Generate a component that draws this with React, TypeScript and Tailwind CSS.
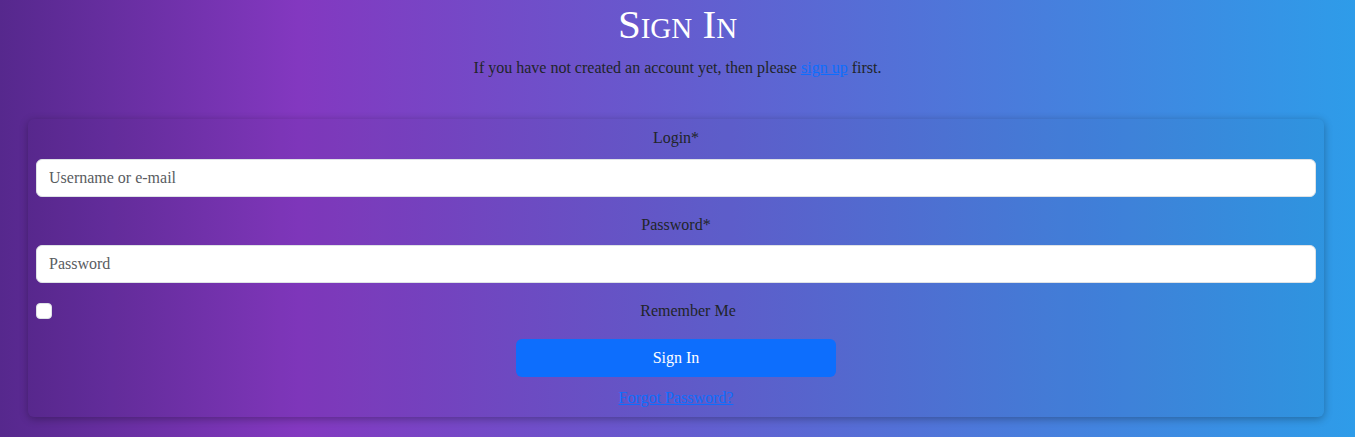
import React, { useState } from "react";

const App: React.FC = () => {
  const [login, setLogin] = useState("");
  const [password, setPassword] = useState("");
  const [remember, setRemember] = useState(false);

  return (
    <div className="min-h-screen bg-linear-to-r/srgb from-[#56288d] via-[#8338c0] via-22% to-[#2e9ce9] font-['Liberation_Serif',serif] text-[#212529] text-base">
      <h1 className="text-center text-[41px] leading-[48px] text-white [font-variant:small-caps]">Sign In</h1>
      <p className="mt-2 text-center leading-6">
        If you have not created an account yet, then please{" "}
        <a href="#" className="text-[#0d6efd] underline">sign up</a> first.
      </p>

      <form
        className="ml-7 mr-[31px] mt-[39px] rounded-md bg-black/[0.03] px-2 pt-[7px] pb-[7px] shadow-[0_2px_8px_rgba(0,0,0,0.3)]"
        onSubmit={(e) => e.preventDefault()}
      >
        <label className="block text-center leading-6">Login*</label>
        <input
          value={login}
          onChange={(e) => setLogin(e.target.value)}
          placeholder="Username or e-mail"
          className="mt-[9px] block h-[38px] w-full rounded-md border border-[#dee2e6] bg-white px-3 text-base text-[#212529] placeholder:text-[#595c5f] outline-none"
        />

        <label className="mt-4 block text-center leading-6">Password*</label>
        <input
          type="password"
          value={password}
          onChange={(e) => setPassword(e.target.value)}
          placeholder="Password"
          className="mt-2 block h-[38px] w-full rounded-md border border-[#dee2e6] bg-white px-3 text-base text-[#212529] placeholder:text-[#595c5f] outline-none"
        />

        <div className="mt-4 flex items-center">
          <input
            type="checkbox"
            checked={remember}
            onChange={(e) => setRemember(e.target.checked)}
            className="h-4 w-4 shrink-0 appearance-none rounded-[4px] border border-[#dee2e6] bg-white"
          />
          <span className="ml-2 flex-1 text-center leading-6">Remember Me</span>
        </div>

        <div className="mt-4 flex justify-center">
          <button
            type="submit"
            className="h-[38px] w-80 rounded-md bg-[#0d6efd] text-white"
          >
            Sign In
          </button>
        </div>

        <div className="mt-[9px] text-center leading-6">
          <a href="#" className="text-[#0d6efd] underline">Forgot Password?</a>
        </div>
      </form>
    </div>
  );
};

export default App;
